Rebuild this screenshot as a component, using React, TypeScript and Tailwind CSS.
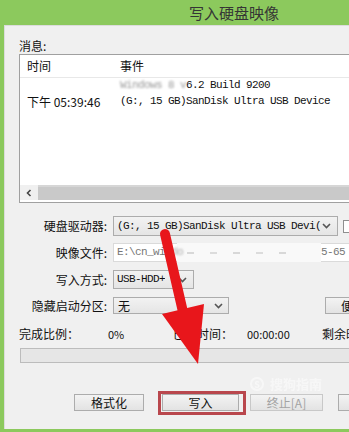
import React from "react";

const cn = { fontFamily: '"Noto Sans CJK SC", "Noto Sans", sans-serif' };
const mono = { fontFamily: '"Liberation Mono", "Noto Sans CJK SC", monospace' };

function Chevron() {
  return (
    <svg width="9" height="6" viewBox="0 0 9 6" className="shrink-0">
      <path d="M1 1 L4.5 4.5 L8 1" fill="none" stroke="#555" strokeWidth="1.6" />
    </svg>
  );
}

function Select({ width, height, children }: { width: string; height: string; children: React.ReactNode }) {
  return (
    <div
      className={`${width} ${height} flex items-center justify-between border border-[#acacac] bg-gradient-to-b from-[#f2f2f2] to-[#e5e5e5] pl-[3px] pr-[6px]`}
    >
      <div className="truncate text-[11px] tracking-[-0.6px] text-[#111]" style={mono}>
        {children}
      </div>
      <Chevron />
    </div>
  );
}

function Label({ children }: { children: React.ReactNode }) {
  return (
    <div className="w-[88px] shrink-0 text-right text-[12px] leading-[16px] text-[#111]" style={cn}>
      {children}
    </div>
  );
}

function Btn({ width, children, disabled }: { width: string; children: React.ReactNode; disabled?: boolean }) {
  return (
    <div
      className={`${width} h-[17px] shrink-0 flex items-center justify-center border border-[#acacac] bg-gradient-to-b from-[#f3f3f3] to-[#e3e3e3] text-[12px] leading-[15px] ${disabled ? "text-[#a3a3a3] border-[#c8c8c8]" : "text-[#111]"}`}
      style={cn}
    >
      {children}
    </div>
  );
}

export default function App() {
  return (
    <div className="relative h-[432px] w-[349px] overflow-hidden bg-[#8cc95d]" style={cn}>
      {/* Title bar */}
      <div className="flex h-[25px] w-[468px] items-center justify-center pt-[2px] text-[15px] text-[#353535]">
        写入硬盘映像
      </div>

      {/* Window body */}
      <div className="ml-[4px] flex h-[404px] w-[460px] flex-col border-l border-t border-[#dcdcdc] bg-[#f0f0f0] pl-[14px]">
        <div className="pt-[12px] text-[12px] leading-[16px] text-[#111]">消息:</div>

        {/* Message list */}
        <div className="flex h-[149px] flex-col border border-[#a0a0a0] bg-white">
          <div className="flex h-[23px] items-center border-b border-[#e8e8e8] pl-[7px] text-[12px] text-[#111]">
            <div className="w-[93px]">时间</div>
            <div>事件</div>
          </div>
          <div className="flex h-[16px] items-center pl-[7px] -mt-px">
            <div className="w-[93px]" />
            <div className="flex text-[11px] tracking-[-0.6px] text-[#111]" style={mono}>
              <span className="text-[#999] blur-[1.2px] whitespace-pre">Windows 8 v</span>
              <span className="whitespace-pre">6.2 Build 9200</span>
            </div>
          </div>
          <div className="flex h-[17px] items-center pl-[7px]">
            <div className="w-[93px] text-[12px] text-[#111]">下午 05:39:46</div>
            <div className="whitespace-pre text-[11px] tracking-[-0.6px] text-[#111]" style={mono}>
              (G:, 15 GB)SanDisk Ultra USB Device
            </div>
          </div>
          <div className="flex-1" />
          <div className="mb-[2px] flex h-[15px]">
            <div className="flex w-[18px] items-center justify-center bg-[#f0f0f0]">
              <svg width="6" height="8" viewBox="0 0 6 8">
                <path d="M4.5 1 L1.5 4 L4.5 7" fill="none" stroke="#444" strokeWidth="1.6" />
              </svg>
            </div>
            <div className="flex-1 border-t-[2px] border-[#d6d6d6] bg-[#c9c9c9]" />
          </div>
        </div>

        {/* Drive */}
        <div className="mt-[13px] flex items-center">
          <Label>硬盘驱动器:</Label>
          <div className="ml-[6px]">
            <Select width="w-[225px]" height="h-[20px]">(G:, 15 GB)SanDisk Ultra USB Devi(</Select>
          </div>
          <div className="ml-[5px] h-[13px] w-[13px] border border-[#8f8f8f] bg-white" />
        </div>

        {/* Image file */}
        <div className="mt-[7px] flex items-center">
          <Label>映像文件:</Label>
          <div className="ml-[6px] flex h-[19px] w-[300px] items-center border border-[#dadada] bg-white pl-[3px] text-[11px] tracking-[-0.6px] text-[#777]" style={mono}>
            <span className="whitespace-pre">E:\cn_wi</span>
            <span className="w-[12px] whitespace-pre text-[#aaa] blur-[1px]">ndo</span>
            <span className="flex h-[19px] w-[144px] items-center gap-[16px] bg-[#f9f9f9] pl-[10px]">
              <span className="h-[2px] w-[7px] bg-[#d8d8d8] blur-[0.6px]" />
              <span className="h-[2px] w-[7px] bg-[#dcdcdc] blur-[0.6px]" />
              <span className="h-[2px] w-[7px] bg-[#d8d8d8] blur-[0.6px]" />
              <span className="h-[2px] w-[7px] bg-[#dcdcdc] blur-[0.6px]" />
              <span className="h-[2px] w-[7px] bg-[#d8d8d8] blur-[0.6px]" />
            </span>
            <span className="whitespace-pre">5-65</span>
          </div>
        </div>

        {/* Write mode */}
        <div className="mt-[8px] flex items-center">
          <Label>写入方式:</Label>
          <div className="ml-[6px]">
            <Select width="w-[81px]" height="h-[19px]">USB-HDD+</Select>
          </div>
        </div>

        {/* Hidden partition */}
        <div className="mt-[8px] flex items-center">
          <Label>隐藏启动分区:</Label>
          <div className="ml-[6px]">
            <div className="flex h-[17px] w-[116px] items-center justify-between border border-[#acacac] bg-gradient-to-b from-[#f2f2f2] to-[#e5e5e5] pl-[4px] pr-[5px]">
              <span className="text-[12px] leading-[14px] text-[#111]">无</span>
              <Chevron />
            </div>
          </div>
          <div className="ml-[96px]">
            <Btn width="w-[80px]">便捷启动</Btn>
          </div>
        </div>

        {/* Progress info */}
        <div className="mt-[12px] flex text-[12px] leading-[16px] text-[#111]">
          <div className="w-[89px]">完成比例：</div>
          <div className="w-[65px] text-[11px]">0%</div>
          <div className="w-[74px]">已用时间：</div>
          <div className="w-[75px] text-[11px]">00:00:00</div>
          <div>剩余时间：</div>
        </div>

        <div className="ml-px mt-[6px] h-[15px] w-[420px] border border-[#bcbcbc] bg-[#e6e6e6]" />

        {/* Buttons */}
        <div className="mt-[31px] flex">
          <div className="ml-[55px]">
            <Btn width="w-[70px]">格式化</Btn>
          </div>
          <div className="relative ml-[18px]">
            <Btn width="w-[77px]">写入</Btn>
            <div className="absolute -bottom-[4px] -left-[4px] -right-[7px] -top-[3px] border-[3px] border-[#b9474d]" />
          </div>
          <div className="ml-[11px]">
            <Btn width="w-[73px]" disabled>
              终止[A]
            </Btn>
          </div>
          <div className="ml-[15px]">
            <Btn width="w-[73px]">返回</Btn>
          </div>
        </div>
      </div>

      {/* Watermark */}
      <div className="pointer-events-none absolute left-[250px] top-[376px] flex items-center gap-[6px] text-[13px] font-bold leading-[16px] text-white opacity-50">
        <span className="flex h-[14px] w-[14px] items-center justify-center rounded-full border-2 border-white text-[9px] leading-none">S</span>
        <span>搜狗指南</span>
      </div>

      {/* Red annotation arrow */}
      <svg className="pointer-events-none absolute left-0 top-0" width="349" height="432" viewBox="0 0 349 432">
        <line x1="165" y1="234" x2="183" y2="312" stroke="#e8161b" strokeWidth="10" strokeLinecap="round" />
        <polygon points="162,314 204,304 198,364" fill="#e8161b" />
      </svg>
    </div>
  );
}
